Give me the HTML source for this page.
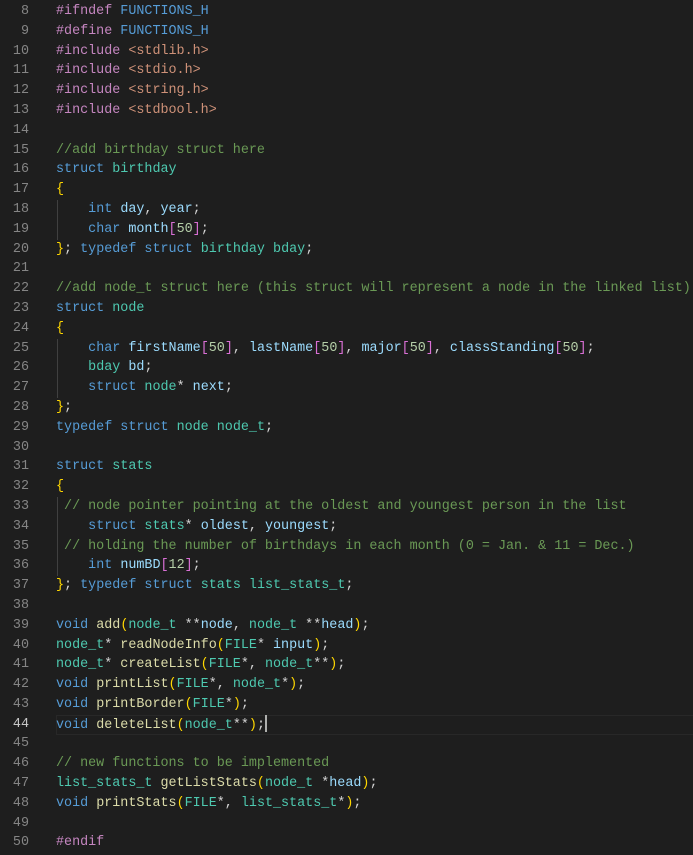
<!DOCTYPE html>
<html><head><meta charset="utf-8"><style>
html,body{margin:0;padding:0;background:#1e1e1e;width:693px;height:855px;overflow:hidden}
.w{position:absolute;top:2px;left:0;width:693px;font-family:"Liberation Mono",monospace;font-size:13.4px;line-height:19.8px;color:#d4d4d4}
.l{position:relative;height:19.8px;white-space:pre}
.n{position:absolute;left:0;width:29px;text-align:right;color:#858585}
.c{position:absolute;left:56px}
.g{position:absolute;left:57px;top:0;width:1px;height:19.8px;background:#404040}
.cur{position:absolute;left:56px;right:0;top:0;height:18px;border:1px solid #282828;border-right:none}
.p{color:#c586c0}.m{color:#569cd6}.s{color:#ce9178}.cm{color:#6a9955}.k{color:#569cd6}.t{color:#4ec9b0}.v{color:#9cdcfe}.f{color:#dcdcaa}.y{color:#ffd700}.pk{color:#da70d6}.nu{color:#b5cea8}
</style></head><body><div class="w">
<div class="l"><span class="n">8</span><span class="c"><span class="p">#ifndef</span> <span class="m">FUNCTIONS_H</span></span></div>
<div class="l"><span class="n">9</span><span class="c"><span class="p">#define</span> <span class="m">FUNCTIONS_H</span></span></div>
<div class="l"><span class="n">10</span><span class="c"><span class="p">#include</span> <span class="s">&lt;stdlib.h&gt;</span></span></div>
<div class="l"><span class="n">11</span><span class="c"><span class="p">#include</span> <span class="s">&lt;stdio.h&gt;</span></span></div>
<div class="l"><span class="n">12</span><span class="c"><span class="p">#include</span> <span class="s">&lt;string.h&gt;</span></span></div>
<div class="l"><span class="n">13</span><span class="c"><span class="p">#include</span> <span class="s">&lt;stdbool.h&gt;</span></span></div>
<div class="l"><span class="n">14</span></div>
<div class="l"><span class="n">15</span><span class="c cm">//add birthday struct here</span></div>
<div class="l"><span class="n">16</span><span class="c"><span class="k">struct</span> <span class="t">birthday</span></span></div>
<div class="l"><span class="n">17</span><span class="c y">{</span></div>
<div class="l"><span class="n">18</span><span class="g"></span><span class="c">    <span class="k">int</span> <span class="v">day</span>, <span class="v">year</span>;</span></div>
<div class="l"><span class="n">19</span><span class="g"></span><span class="c">    <span class="k">char</span> <span class="v">month</span><span class="pk">[</span><span class="nu">50</span><span class="pk">]</span>;</span></div>
<div class="l"><span class="n">20</span><span class="c"><span class="y">}</span>; <span class="k">typedef</span> <span class="k">struct</span> <span class="t">birthday</span> <span class="t">bday</span>;</span></div>
<div class="l"><span class="n">21</span></div>
<div class="l"><span class="n">22</span><span class="c cm">//add node_t struct here (this struct will represent a node in the linked list)</span></div>
<div class="l"><span class="n">23</span><span class="c"><span class="k">struct</span> <span class="t">node</span></span></div>
<div class="l"><span class="n">24</span><span class="c y">{</span></div>
<div class="l"><span class="n">25</span><span class="g"></span><span class="c">    <span class="k">char</span> <span class="v">firstName</span><span class="pk">[</span><span class="nu">50</span><span class="pk">]</span>, <span class="v">lastName</span><span class="pk">[</span><span class="nu">50</span><span class="pk">]</span>, <span class="v">major</span><span class="pk">[</span><span class="nu">50</span><span class="pk">]</span>, <span class="v">classStanding</span><span class="pk">[</span><span class="nu">50</span><span class="pk">]</span>;</span></div>
<div class="l"><span class="n">26</span><span class="g"></span><span class="c">    <span class="t">bday</span> <span class="v">bd</span>;</span></div>
<div class="l"><span class="n">27</span><span class="g"></span><span class="c">    <span class="k">struct</span> <span class="t">node</span>* <span class="v">next</span>;</span></div>
<div class="l"><span class="n">28</span><span class="c"><span class="y">}</span>;</span></div>
<div class="l"><span class="n">29</span><span class="c"><span class="k">typedef</span> <span class="k">struct</span> <span class="t">node</span> <span class="t">node_t</span>;</span></div>
<div class="l"><span class="n">30</span></div>
<div class="l"><span class="n">31</span><span class="c"><span class="k">struct</span> <span class="t">stats</span></span></div>
<div class="l"><span class="n">32</span><span class="c y">{</span></div>
<div class="l"><span class="n">33</span><span class="g"></span><span class="c cm"> // node pointer pointing at the oldest and youngest person in the list</span></div>
<div class="l"><span class="n">34</span><span class="g"></span><span class="c">    <span class="k">struct</span> <span class="t">stats</span>* <span class="v">oldest</span>, <span class="v">youngest</span>;</span></div>
<div class="l"><span class="n">35</span><span class="g"></span><span class="c cm"> // holding the number of birthdays in each month (0 = Jan. &amp; 11 = Dec.)</span></div>
<div class="l"><span class="n">36</span><span class="g"></span><span class="c">    <span class="k">int</span> <span class="v">numBD</span><span class="pk">[</span><span class="nu">12</span><span class="pk">]</span>;</span></div>
<div class="l"><span class="n">37</span><span class="c"><span class="y">}</span>; <span class="k">typedef</span> <span class="k">struct</span> <span class="t">stats</span> <span class="t">list_stats_t</span>;</span></div>
<div class="l"><span class="n">38</span></div>
<div class="l"><span class="n">39</span><span class="c"><span class="k">void</span> <span class="f">add</span><span class="y">(</span><span class="t">node_t</span> **<span class="v">node</span>, <span class="t">node_t</span> **<span class="v">head</span><span class="y">)</span>;</span></div>
<div class="l"><span class="n">40</span><span class="c"><span class="t">node_t</span>* <span class="f">readNodeInfo</span><span class="y">(</span><span class="t">FILE</span>* <span class="v">input</span><span class="y">)</span>;</span></div>
<div class="l"><span class="n">41</span><span class="c"><span class="t">node_t</span>* <span class="f">createList</span><span class="y">(</span><span class="t">FILE</span>*, <span class="t">node_t</span>**<span class="y">)</span>;</span></div>
<div class="l"><span class="n">42</span><span class="c"><span class="k">void</span> <span class="f">printList</span><span class="y">(</span><span class="t">FILE</span>*, <span class="t">node_t</span>*<span class="y">)</span>;</span></div>
<div class="l"><span class="n">43</span><span class="c"><span class="k">void</span> <span class="f">printBorder</span><span class="y">(</span><span class="t">FILE</span>*<span class="y">)</span>;</span></div>
<div class="l"><span class="cur"></span><span class="n" style="color:#c6c6c6">44</span><span class="c"><span class="k">void</span> <span class="f">deleteList</span><span class="y">(</span><span class="t">node_t</span>**<span class="y">)</span>;<span style="display:inline-block;width:2px;height:17px;background:#aeafad;vertical-align:-4px"></span></span></div>
<div class="l"><span class="n">45</span></div>
<div class="l"><span class="n">46</span><span class="c cm">// new functions to be implemented</span></div>
<div class="l"><span class="n">47</span><span class="c"><span class="t">list_stats_t</span> <span class="f">getListStats</span><span class="y">(</span><span class="t">node_t</span> *<span class="v">head</span><span class="y">)</span>;</span></div>
<div class="l"><span class="n">48</span><span class="c"><span class="k">void</span> <span class="f">printStats</span><span class="y">(</span><span class="t">FILE</span>*, <span class="t">list_stats_t</span>*<span class="y">)</span>;</span></div>
<div class="l"><span class="n">49</span></div>
<div class="l"><span class="n">50</span><span class="c p">#endif</span></div>
</div></body></html>
